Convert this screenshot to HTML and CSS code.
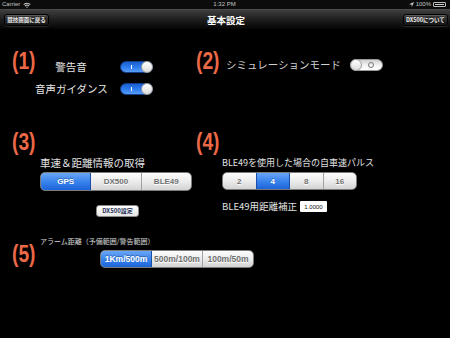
FILE: index.html
```html
<!DOCTYPE html>
<html lang="ja">
<head>
<meta charset="utf-8">
<title>基本設定</title>
<link rel="stylesheet" href="styles.css">
</head>
<body>
<div class="statusbar">
  <div class="sb-left">Carrier
    <svg class="wifi" width="8" height="6" viewBox="0 0 8 6"><path d="M0.3 2.2 A5.2 5.2 0 0 1 7.7 2.2 L6.9 3 A4 4 0 0 0 1.1 3 Z M1.7 3.6 A3.2 3.2 0 0 1 6.3 3.6 L5.5 4.4 A2 2 0 0 0 2.5 4.4 Z M3.2 5 A1.1 1.1 0 0 1 4.8 5 L4 5.9 Z" fill="#cfcfcf"/></svg>
  </div>
  <div class="sb-time">1:32 PM</div>
  <div class="sb-right">
    <svg width="5" height="5" viewBox="0 0 5 5"><path d="M5 0 L0 2.2 L2.6 2.4 L2.8 5 Z" fill="#cfcfcf"/></svg>
    <span>100%</span>
    <span class="battery"><span class="battery-fill"></span></span>
  </div>
</div>
<div class="navbar">
  <button class="navbtn">競技画面に戻る</button>
  <div class="navtitle">基本設定</div>
  <button class="navbtn">DX500について</button>
</div>
<main class="content">
  <div class="row row1">
    <section class="sec sec1">
      <div class="num">(1)</div>
      <div class="switches">
        <span class="lbl">警告音</span><span class="toggle on"><i class="mark-i"></i><i class="knob"></i></span>
        <span class="lbl">音声ガイダンス</span><span class="toggle on"><i class="mark-i"></i><i class="knob"></i></span>
      </div>
    </section>
    <section class="sec sec2">
      <div class="num">(2)</div>
      <span class="lbl lbl-sim">シミュレーションモード</span>
      <span class="toggle off"><i class="knob"></i><i class="mark-o"></i></span>
    </section>
  </div>

  <div class="row row2">
    <section class="sec sec3">
      <div class="num">(3)</div>
      <div class="body body3">
        <div class="title">車速＆距離情報の取得</div>
        <div class="seg seg3">
          <span class="seg-item sel">GPS</span><span class="seg-item">DX500</span><span class="seg-item">BLE49</span>
        </div>
        <div class="btnwrap"><button class="smallbtn">DX500設定</button></div>
      </div>
    </section>
    <section class="sec sec4">
      <div class="num">(4)</div>
      <div class="body body4">
        <div class="title small">BLE49を使用した場合の自車速パルス</div>
        <div class="seg seg4">
          <span class="seg-item">2</span><span class="seg-item sel">4</span><span class="seg-item">8</span><span class="seg-item">16</span>
        </div>
        <div class="corr">
          <span class="title small">BLE49用距離補正</span>
          <span class="input">1.0000</span>
        </div>
      </div>
    </section>
  </div>

  <section class="row3">
    <div class="title tiny">アラーム距離（予備範囲/警告範囲）</div>
    <div class="row3-line">
      <div class="num">(5)</div>
      <div class="seg seg5">
        <span class="seg-item sel">1Km/500m</span><span class="seg-item">500m/100m</span><span class="seg-item">100m/50m</span>
      </div>
    </div>
  </section>
</main>
</body>
</html>
```
FILE: styles.css
```css
html, body {
  margin: 0;
  padding: 0;
}
body {
  width: 450px;
  height: 338px;
  overflow: hidden;
  background: #000;
  font-family: "Noto Sans CJK JP", "Noto Sans", sans-serif;
  color: #e2e2e2;
}

/* status bar */
.statusbar {
  height: 9px;
  display: grid;
  grid-template-columns: 1fr auto 1fr;
  align-items: center;
  padding: 0 3px 0 2px;
  background: #0c0c0c;
  font: 6px/9px "Liberation Sans", sans-serif;
  color: #c4c4c4;
}
.sb-left {
  display: flex;
  align-items: center;
  gap: 3px;
}
.sb-right {
  display: flex;
  align-items: center;
  justify-content: flex-end;
  gap: 2px;
}
.battery {
  width: 13px;
  height: 5px;
  border: 1px solid #bbb;
  border-radius: 1px;
  box-sizing: border-box;
  padding: 1px;
  display: flex;
  margin-right: 1px;
}
.battery-fill {
  flex: 1;
  background: #ccc;
}

/* nav bar */
.navbar {
  height: 20px;
  display: flex;
  align-items: center;
  justify-content: space-between;
  padding: 0 2px 0 4px;
  background: linear-gradient(#3e3e3e, #1e1e1e 50%, #050505);
  border-top: 1px solid #4a4a4a;
  box-sizing: border-box;
}
.navbtn {
  width: 45px;
  height: 12px;
  padding: 0;
  border: 1px solid #000;
  border-radius: 3px;
  background: linear-gradient(#3b3b3b, #161616);
  box-shadow: inset 0 1px 0 rgba(255,255,255,0.18), 0 1px 0 rgba(255,255,255,0.12);
  color: #eaeaea;
  font-family: "Noto Sans CJK JP", sans-serif;
  font-size: 5.5px;
  font-weight: bold;
  line-height: 10px;
}
.navtitle {
  font-size: 9.5px;
  font-weight: bold;
  color: #fff;
  line-height: 12px;
}

/* content */
.content {
  padding: 21px 0 0 12px;
}
.row {
  display: grid;
  grid-template-columns: 184px 1fr;
}
.num {
  width: 23px;
  height: 22px;
  font: bold 24px/22px "Liberation Sans", sans-serif;
  color: #ec6947;
  white-space: nowrap;
  transform: scaleX(0.8);
  transform-origin: left center;
  flex: none;
}

.sec1 {
  display: flex;
  align-items: flex-start;
}
.switches {
  display: grid;
  grid-template-columns: 72px 33px;
  column-gap: 13px;
  row-gap: 9px;
  align-items: center;
  margin-top: 10px;
}
.lbl {
  font-size: 10.5px;
  line-height: 13px;
  color: #e4e4e4;
  text-align: center;
  white-space: nowrap;
}

/* toggles */
.toggle {
  position: relative;
  width: 33px;
  height: 12px;
  border-radius: 6px;
  box-sizing: border-box;
  display: block;
}
.toggle.on {
  background: linear-gradient(#1a5fcf, #2f7ef0 55%, #5a9cf5);
  border: 1px solid #123f8c;
}
.toggle.off {
  background: linear-gradient(#cfcfcf, #f6f6f6 55%, #ffffff);
  border: 1px solid #9a9a9a;
}
.knob {
  position: absolute;
  top: -1px;
  width: 12px;
  height: 12px;
  border-radius: 50%;
  background: linear-gradient(#ffffff, #dcdcdc);
  border: 1px solid #9c9c9c;
  box-sizing: border-box;
}
.on .knob { right: -1px; }
.off .knob { left: -1px; }
.mark-i {
  position: absolute;
  left: 10px;
  top: 3px;
  width: 1px;
  height: 4px;
  background: #fff;
}
.mark-o {
  position: absolute;
  right: 8px;
  top: 2px;
  width: 6px;
  height: 6px;
  border: 1px solid #777;
  border-radius: 50%;
  box-sizing: border-box;
}

.sec2 {
  display: flex;
  align-items: flex-start;
}
.sec2 .num {
  width: 24px;
}
.lbl-sim {
  margin-left: 6px;
  margin-top: 8px;
  color: #d0d0d0;
}
.sec2 .toggle {
  margin-left: 9px;
  margin-top: 9px;
}

/* row 2 */
.row2 {
  margin-top: 36px;
}
.body {
  display: flex;
  flex-direction: column;
  align-items: flex-start;
}
.body3 {
  margin-left: 28px;
}
.body4 {
  margin-left: 26px;
}
.title {
  margin-top: 3px;
  font-size: 10.5px;
  line-height: 13px;
  color: #e0e0e0;
  white-space: nowrap;
}
.title.small {
  font-size: 9px;
}
.title.tiny {
  font-size: 7px;
  line-height: 8px;
  margin-top: 0;
  margin-left: 28px;
  color: #d8d8d8;
}

/* segmented controls */
.seg {
  display: flex;
  margin-top: 3px;
  height: 19px;
  border: 1px solid #7b7b7b;
  border-radius: 5px;
  overflow: hidden;
  box-sizing: border-box;
  background: linear-gradient(#fcfcfc, #ececec 50%, #d3d3d3);
}
.seg-item {
  flex: 1;
  display: flex;
  align-items: center;
  justify-content: center;
  font: bold 8px "Liberation Sans", sans-serif;
  color: #707070;
  text-shadow: 0 1px 0 #fff;
  border-left: 1px solid #a2a2a2;
}
.seg-item:first-child {
  border-left: none;
}
.seg-item.sel {
  background: linear-gradient(#6aa6f5, #3a84ee 50%, #1c64d8);
  color: #fff;
  text-shadow: 0 -1px 0 rgba(0,0,0,0.3);
  border-left-color: #1a4fa8;
}
.seg-item.sel + .seg-item {
  border-left-color: #1a4fa8;
}
.seg3 {
  width: 152px;
}
.seg4 {
  width: 135px;
  height: 18px;
}
.seg5 {
  width: 154px;
  height: 18px;
  margin-top: 7px;
  margin-left: 65px;
}
.seg5 .seg-item {
  font-size: 8.5px;
}

.btnwrap {
  width: 152px;
  display: flex;
  justify-content: center;
  margin-top: 14px;
}
.smallbtn {
  width: 43px;
  height: 12px;
  padding: 0;
  margin-left: 3px;
  border: 1px solid #8a8a8a;
  border-radius: 3px;
  background: linear-gradient(#ffffff, #e6e6e6);
  color: #27305a;
  font-family: "Noto Sans CJK JP", sans-serif;
  font-size: 6px;
  font-weight: bold;
  line-height: 10px;
}

.corr {
  display: flex;
  align-items: center;
  margin-top: 10px;
  height: 13px;
}
.corr .title {
  margin-top: 0;
  font-size: 9.5px;
}
.input {
  margin-left: 3px;
  width: 27px;
  height: 11px;
  background: #fff;
  border-radius: 1px;
  box-sizing: border-box;
  display: flex;
  align-items: center;
  justify-content: center;
  font: 6px "Liberation Sans", sans-serif;
  color: #111;
}

/* row 3 */
.row3 {
  margin-top: 20px;
}
.row3-line {
  display: flex;
  align-items: flex-start;
  margin-top: -2px;
}
```
